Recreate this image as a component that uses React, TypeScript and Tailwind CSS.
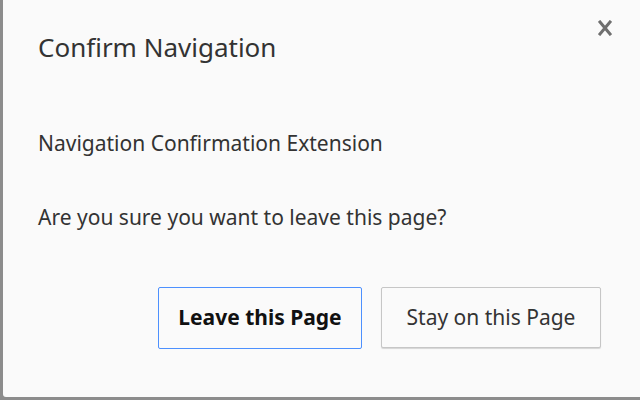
export default function App() {
  return (
    <div className="w-[640px] h-[400px] bg-[#8c8c8c] overflow-hidden relative" style={{ fontFamily: '"Noto Sans", "Open Sans", sans-serif' }}>
      <div className="ml-[3px] w-[637px] h-[397px] bg-[#fafafa] rounded-bl-[3px] relative flex flex-col pl-[35px] pr-[39px]">
        <button className="absolute right-[28px] top-[20px] text-[#6f6f6f]">
          <svg width="14" height="16" viewBox="0 0 14 16">
            <path d="M2 2 L12 14 M12 2 L2 14" stroke="currentColor" strokeWidth="3" strokeLinecap="square" />
          </svg>
        </button>
        <h1 className="mt-[30px] text-[26px] leading-[34px] text-[#333]">Confirm Navigation</h1>
        <p className="mt-[65px] text-[21px] leading-[28px] text-[#333]">Navigation Confirmation Extension</p>
        <p className="mt-[46px] text-[21px] leading-[28px] text-[#333]">Are you sure you want to leave this page?</p>
        <div className="mt-[56px] flex justify-end gap-[19px]">
          <button className="w-[204px] h-[62px] border border-[#4d90fe] rounded-[2px] bg-[#fafafa] text-[21px] font-bold text-[#111]">
            Leave this Page
          </button>
          <button className="w-[220px] h-[61px] border border-[#c6c6c6] rounded-[2px] bg-[#fafafa] shadow-[0_1px_1px_rgba(0,0,0,0.15)] text-[21px] text-[#333]">
            Stay on this Page
          </button>
        </div>
      </div>
    </div>
  );
}
